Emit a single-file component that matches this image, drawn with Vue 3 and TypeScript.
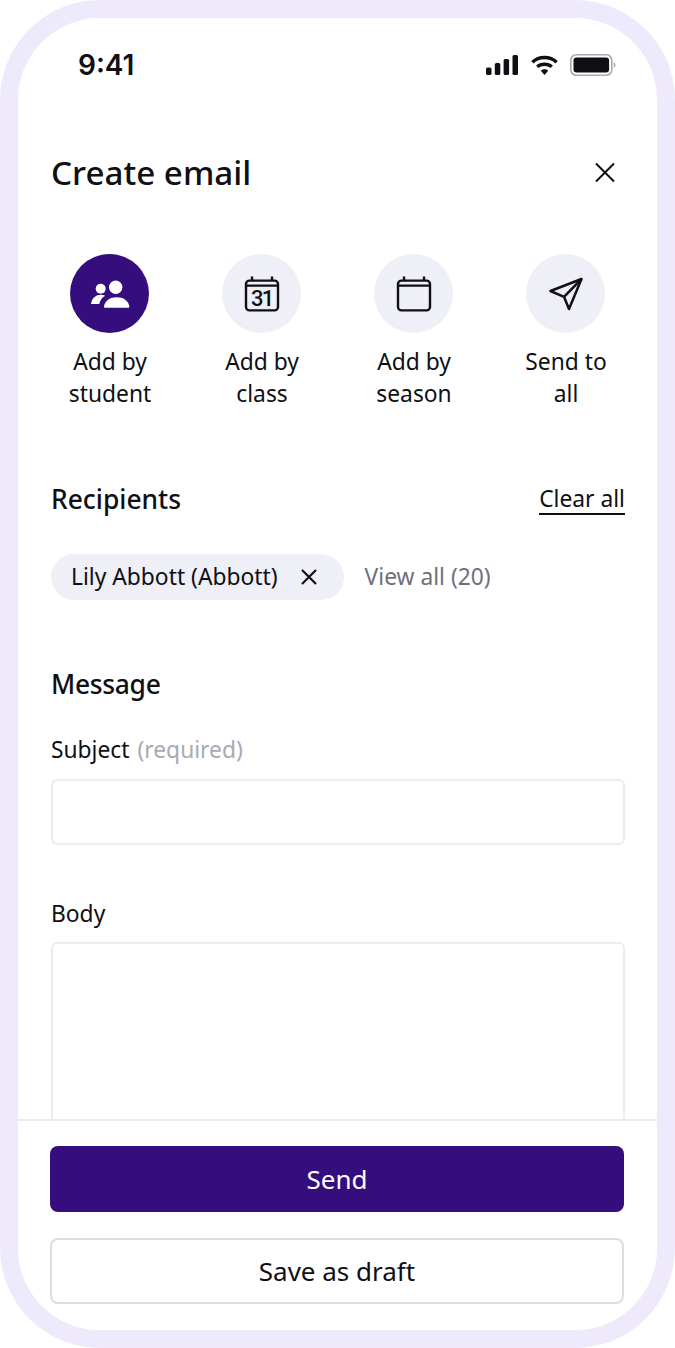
<template>
  <div class="phone">
    <div class="screen">
      <div class="status-bar">
        <span class="time">9:41</span>
        <div class="status-icons">
          <svg width="32" height="20" viewBox="0 0 32 20" fill="#0f0f14">
            <rect x="0" y="12.500" width="5.500" height="7.500" rx="1.600" />
            <rect x="8.800" y="8" width="5.500" height="12" rx="1.600" />
            <rect x="17.600" y="4" width="5.500" height="16" rx="1.600" />
            <rect x="26.500" y="0" width="5.500" height="20" rx="1.600" />
          </svg>
          <svg width="27" height="20" viewBox="0 0 27 20" fill="none" stroke="#0f0f14" stroke-width="3.400">
            <path d="M1.400 7.200C8 1 19 1 25.600 7.200" />
            <path d="M6.200 11.800C10 8.300 17 8.300 20.800 11.800" />
            <path d="M9.800 15.700 13.500 20 17.200 15.700C15 13.800 12 13.800 9.800 15.700Z" fill="#0f0f14" stroke="none" />
          </svg>
          <svg class="battery" width="46" height="22" viewBox="0 0 46 22" fill="none">
            <rect x="0.800" y="0.800" width="41" height="20.400" rx="5.500" stroke="#a9a9ae" stroke-width="1.600" />
            <rect x="3.500" y="3.500" width="35.600" height="15" rx="3" fill="#0f0f14" />
            <path d="M43.600 8v6c1.200-.4 2-1.600 2-3s-.8-2.600-2-3Z" fill="#b4b4b8" />
          </svg>
        </div>
      </div>

      <div class="content">
        <div class="title-row">
          <h1>Create email</h1>
          <svg class="close" width="24" height="24" viewBox="0 0 24 24" fill="none" stroke="#0f0f14" stroke-width="2">
            <path d="M3 3.500 21 21.500M21 3.500 3 21.500" />
          </svg>
        </div>

        <div class="options">
          <div v-for="opt in options" :key="opt.id" class="option">
            <div class="circle" :class="{ active: opt.active }">
              <svg v-if="opt.id === 'student'" width="40" height="40" viewBox="0 0 40 40" fill="#fff">
                <circle cx="10.700" cy="14.800" r="5" />
                <circle cx="25.700" cy="13.200" r="6.700" />
                <path d="M1 30C1.800 24.200 5.600 20.800 11 20.800 12.600 20.800 14 21.100 15.200 21.700 12 23.500 10 26.500 9.300 30Z" />
                <path d="M14 32.300C15 26.500 20 23.200 26.700 23.200S38.300 26.500 39.300 32.300C39.400 33.300 38.900 33.800 38.100 33.800H15.200C14.400 33.800 13.900 33.300 14 32.300Z" />
              </svg>
              <svg v-else-if="opt.id === 'class'" width="36" height="36" viewBox="0 0 36 36" fill="none" stroke="#0f0f14" stroke-width="2.400">
                <rect x="2" y="4.600" width="32" height="29.800" rx="3.500" />
                <path d="M2 9.600H34M8 .5V4.600M28 .5V4.600" />
                <text x="17.800" y="30" class="cal-num" text-anchor="middle">31</text>
              </svg>
              <svg v-else-if="opt.id === 'season'" width="36" height="36" viewBox="0 0 36 36" fill="none" stroke="#0f0f14" stroke-width="2.400">
                <rect x="2" y="4.600" width="32" height="29.800" rx="3.500" />
                <path d="M2 9.600H34M8 .5V4.600M28 .5V4.600" />
              </svg>
              <svg v-else width="36" height="36" viewBox="0 0 36 36" fill="none" stroke="#0f0f14" stroke-width="2.500" stroke-linejoin="round">
                <path d="M33.500 3 2.500 15 16 20.800 21 33Z" />
                <path d="M33.500 3 16 20.800" />
              </svg>
            </div>
            <div class="option-label">{{ opt.line1 }}<br />{{ opt.line2 }}</div>
          </div>
        </div>

        <div class="recipients-head">
          <h2>Recipients</h2>
          <span class="clear-all">Clear all</span>
        </div>
        <div class="chips">
          <div class="chip">
            <span class="chip-text">Lily Abbott (Abbott)</span>
            <svg width="18" height="18" viewBox="0 0 18 18" fill="none" stroke="#0f0f14" stroke-width="2.200">
              <path d="M2 2 16 16M16 2 2 16" />
            </svg>
          </div>
          <span class="view-all">View all (20)</span>
        </div>

        <h2 class="message-title">Message</h2>
        <label class="field-label">Subject <span class="required">(required)</span></label>
        <div class="input"></div>
        <label class="field-label body-label">Body</label>
        <div class="textarea"></div>
      </div>

      <div class="footer">
        <button class="btn primary">Send</button>
        <button class="btn secondary">Save as draft</button>
      </div>
    </div>
  </div>
</template>

<script setup lang="ts">
interface RecipientOption {
  id: string
  line1: string
  line2: string
  active?: boolean
}

const options: RecipientOption[] = [
  { id: "student", line1: "Add by", line2: "student", active: true },
  { id: "class", line1: "Add by", line2: "class" },
  { id: "season", line1: "Add by", line2: "season" },
  { id: "all", line1: "Send to", line2: "all" }
]
</script>

<style>
html,
body {
  margin: 0;
  background: #fff;
}
</style>

<style scoped>
.phone {
  width: 675px;
  height: 1348px;
  box-sizing: border-box;
  border: 18px solid #eeeafc;
  border-radius: 100px;
  background: #fff;
  font-family: "Noto Sans", sans-serif;
  color: #0f0f14;
}

.screen {
  height: 100%;
  display: flex;
  flex-direction: column;
  overflow: hidden;
  border-radius: 82px;
}

.status-bar {
  display: flex;
  justify-content: space-between;
  align-items: center;
  height: 36px;
  padding: 29px 41px 0 60px;
  flex: none;
}

.time {
  font-family: Inter, sans-serif;
  font-weight: 600;
  font-size: 28px;
}

.status-icons {
  display: flex;
  align-items: center;
  gap: 13px;
}

.battery {
  margin-left: -1px;
}

.content {
  flex: 1;
  min-height: 0;
  overflow: hidden;
  padding: 0 32px 0 33px;
}

.title-row {
  display: flex;
  justify-content: space-between;
  align-items: center;
  margin-top: 68px;
  height: 44px;
}

h1 {
  margin: 0;
  font-size: 33.2px;
  font-weight: 500;
  line-height: 44px;
}

.close {
  margin-right: 8px;
  margin-top: -2px;
}

.options {
  display: grid;
  grid-template-columns: repeat(4, 152px);
  margin: 59px 0 0 -17px;
}

.option {
  display: flex;
  flex-direction: column;
  align-items: center;
}

.circle {
  width: 79px;
  height: 79px;
  margin-right: 1px;
  border-radius: 50%;
  background: #eff0f7;
  display: flex;
  align-items: center;
  justify-content: center;
}

.circle.active {
  background: #350d7c;
}

.cal-num {
  font-family: Roboto, sans-serif;
  font-size: 22px;
  font-weight: 500;
  letter-spacing: -1.800px;
  fill: #0f0f14;
  stroke: none;
}

.option-label {
  margin-top: 13px;
  font-size: 22.800px;
  line-height: 32px;
  text-align: center;
}

.recipients-head {
  display: flex;
  justify-content: space-between;
  align-items: center;
  margin-top: 69px;
  height: 40px;
}

h2 {
  margin: 0;
  font-size: 26.400px;
  font-weight: 500;
  line-height: 34px;
}

.clear-all {
  font-size: 22.800px;
  line-height: 28px;
  padding-top: 2px;
  border-bottom: 2px solid #0f0f14;
}

.chips {
  display: flex;
  align-items: center;
  gap: 21px;
  margin-top: 35px;
}

.chip {
  display: flex;
  align-items: center;
  gap: 22px;
  height: 46px;
  padding: 0 26px 0 20px;
  border-radius: 23px;
  background: #eff0f7;
  font-size: 22.800px;
}

.chip-text,
.view-all {
  margin-bottom: 2px;
}

.view-all {
  font-size: 22.800px;
  color: #6f6f7d;
}

.message-title {
  margin-top: 67px;
  letter-spacing: -0.300px;
}

.field-label {
  display: block;
  margin-top: 33px;
  font-size: 22.800px;
  line-height: 32px;
}

.required {
  margin-left: 2px;
  color: #a9a9b6;
}

.input {
  margin-top: 13px;
  height: 66px;
  box-sizing: border-box;
  border: 2px solid #ebebf5;
  border-radius: 6px;
}

.body-label {
  margin-top: 53px;
}

.textarea {
  margin-top: 12px;
  height: 300px;
  box-sizing: border-box;
  border: 2px solid #ebebf5;
  border-radius: 6px;
}

.footer {
  flex: none;
  display: flex;
  flex-direction: column;
  gap: 26px;
  padding: 25px 33px 26px 32px;
  border-top: 2px solid #ebebf5;
  background: #fff;
}

.btn {
  height: 66px;
  border-radius: 8px;
  font-family: "Noto Sans", sans-serif;
  font-size: 26px;
  padding: 0;
}

.primary {
  background: #350d7c;
  color: #fff;
  border: none;
}

.secondary {
  background: #fff;
  color: #0f0f14;
  border: 2px solid #dcdce6;
}
</style>
